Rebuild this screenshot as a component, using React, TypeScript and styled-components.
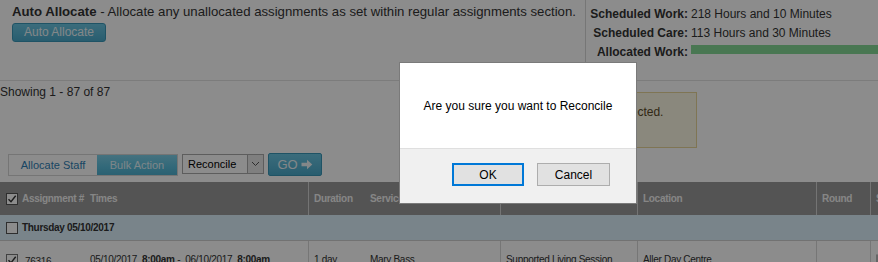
import React from 'react';
import styled, { createGlobalStyle } from 'styled-components';

const GlobalStyle = createGlobalStyle`
  html, body {
    margin: 0;
    padding: 0;
    background: #fff;
  }
  body {
    font-family: "Liberation Sans", Arial, sans-serif;
    color: #333;
    width: 878px;
    height: 262px;
    overflow: hidden;
  }
`;

const Page = styled.div`
  position: relative;
  width: 878px;
  height: 262px;
  overflow: hidden;
`;

const Top = styled.div`
  display: flex;
  height: 80px;
  border-bottom: 1px solid #e2e2e2;
`;

const AutoPanel = styled.div`
  width: 586px;
  padding: 3px 0 0 12px;
  box-sizing: border-box;
  border-right: 1px solid #d8d8d8;
`;

const Intro = styled.div`
  font-size: 13.2px;
  line-height: 18px;
  color: #333;
  white-space: nowrap;
  b {
    font-weight: bold;
  }
`;

const TealButton = styled.button`
  display: block;
  margin-top: 2px;
  width: 94px;
  height: 19px;
  padding: 0;
  border: 1px solid #3a98b8;
  border-radius: 3px;
  background: linear-gradient(#6cc6e2, #4aa9ca);
  color: #eef6f9;
  font-family: inherit;
  font-size: 12px;
  line-height: 17px;
`;

const Stats = styled.div`
  flex: 1;
  display: grid;
  grid-template-columns: 105px 1fr;
  grid-auto-rows: 19px;
  align-items: center;
  padding-top: 4px;
  font-size: 12px;
  color: #333;
`;

const StatLabel = styled.div`
  font-weight: bold;
  text-align: right;
  padding-right: 3px;
  white-space: nowrap;
`;

const StatValue = styled.div`
  white-space: nowrap;
`;

const Bar = styled.div`
  align-self: start;
  height: 9px;
  margin-top: 3px;
  background: #86d996;
`;

const Middle = styled.div`
  display: flex;
  align-items: flex-start;
  height: 72px;
`;

const Showing = styled.div`
  font-size: 12px;
  line-height: 14px;
  padding-top: 4px;
  width: 480px;
`;

const Alert = styled.div`
  margin-top: 11px;
  width: 217px;
  height: 56px;
  box-sizing: border-box;
  padding: 12px 0 0 45px;
  background: #fcf8e3;
  border: 1px solid #e8d59a;
  color: #5a4a2a;
  font-size: 12px;
  white-space: nowrap;
  overflow: hidden;
`;

const Toolbar = styled.div`
  display: flex;
  align-items: flex-start;
  padding-left: 8px;
  height: 29px;
`;

const Tabs = styled.div`
  display: flex;
  height: 22px;
  margin-top: 1px;
  border: 1px solid #d6d6d6;
  box-sizing: border-box;
`;

const Tab = styled.div<{ $active?: boolean }>`
  display: flex;
  align-items: center;
  justify-content: center;
  width: ${p => (p.$active ? 80 : 88)}px;
  font-size: 11px;
  color: ${p => (p.$active ? '#e4f4fa' : '#2f7fb5')};
  background: ${p =>
    p.$active ? 'linear-gradient(#7fd0e8, #5bbfdd 60%, #4fb0cf)' : '#fff'};
`;

const Select = styled.div`
  display: flex;
  margin: 1px 0 0 4px;
  width: 82px;
  height: 20px;
  box-sizing: border-box;
  border: 1px solid #a9a9a9;
  background: #fff;
`;

const SelectText = styled.div`
  flex: 1;
  font-size: 11px;
  line-height: 18px;
  padding-left: 5px;
  color: #000;
`;

const SelectArrow = styled.div`
  width: 15px;
  border-left: 1px solid #a9a9a9;
  background: #e8e8e8;
  display: flex;
  align-items: center;
  justify-content: center;
`;

const GoButton = styled.div`
  margin-left: 4px;
  width: 54px;
  height: 23px;
  box-sizing: border-box;
  border: 1px solid #3a98b8;
  border-radius: 2px;
  background: linear-gradient(#6cc6e2, #4aa9ca);
  color: #eef6f9;
  font-size: 13px;
  display: flex;
  align-items: center;
  justify-content: center;
  gap: 3px;
`;

const cols = '85px 223px 57px 135px 137px 179px 54px 1fr';

const HeadRow = styled.div`
  display: grid;
  grid-template-columns: ${cols};
  height: 33px;
  background: #999;
  color: #f4f4f4;
  font-size: 10px;
  letter-spacing: -0.3px;
  font-weight: bold;
`;

const HeadCell = styled.div<{ $line?: boolean }>`
  display: flex;
  align-items: center;
  gap: 4px;
  padding-left: 5px;
  white-space: nowrap;
  overflow: hidden;
  border-left: ${p => (p.$line ? '1px solid #d4d4d4' : 'none')};
`;

const FirstHeadCell = styled(HeadCell)`
  padding-left: 6px;
  overflow: visible;
`;

const GroupRow = styled.div`
  display: flex;
  align-items: center;
  gap: 4px;
  height: 25px;
  padding-left: 6px;
  background: #dcf0fc;
  border-bottom: 1px solid #d0d0d0;
  font-size: 10px;
  letter-spacing: -0.3px;
  font-weight: bold;
  color: #333;
`;

const DataRow = styled.div`
  display: grid;
  grid-template-columns: ${cols};
  height: 40px;
  font-size: 10px;
  letter-spacing: -0.3px;
  color: #333;
`;

const Cell = styled.div<{ $line?: boolean }>`
  display: flex;
  align-items: flex-start;
  gap: 7px;
  padding: 13px 0 0 5px;
  white-space: nowrap;
  overflow: hidden;
  border-left: ${p => (p.$line ? '1px solid #d8d8d8' : 'none')};
  b {
    font-weight: bold;
  }
`;

const FirstCell = styled(Cell)`
  padding-left: 6px;
`;

const Box = styled.span<{ $dark?: boolean }>`
  display: inline-flex;
  align-items: center;
  justify-content: center;
  width: 12px;
  height: 12px;
  flex: none;
  box-sizing: border-box;
  border: 1px solid ${p => (p.$dark ? '#555' : '#777')};
  background: #fff;
`;

const SmallButton = styled.span`
  width: 20px;
  height: 20px;
  border: 1px solid #bbb;
  border-radius: 3px;
`;

const Overlay = styled.div`
  position: absolute;
  inset: 0;
  background: rgba(0, 0, 0, 0.45);
`;

const Dialog = styled.div`
  position: absolute;
  left: 399px;
  top: 62px;
  width: 238px;
  height: 142px;
  box-sizing: border-box;
  border: 1px solid #7a7a7a;
  background: #fff;
  display: flex;
  flex-direction: column;
  font-family: "Liberation Sans", Arial, sans-serif;
`;

const DialogBody = styled.div`
  height: 85px;
  display: flex;
  align-items: center;
  justify-content: center;
  font-size: 12px;
  color: #000;
  box-sizing: border-box;
`;

const DialogFoot = styled.div`
  flex: 1;
  background: #f0f0f0;
  border-top: 1px solid #dfdfdf;
  display: flex;
  justify-content: flex-end;
  align-items: flex-start;
  gap: 13px;
  padding: 14px 26px 0 0;
`;

const DialogButton = styled.button<{ $primary?: boolean }>`
  width: ${p => (p.$primary ? 72 : 73)}px;
  height: 23px;
  box-sizing: border-box;
  padding: 0;
  background: #e1e1e1;
  border: ${p => (p.$primary ? '2px solid #0078d7' : '1px solid #adadad')};
  font-family: inherit;
  font-size: 12px;
  color: #000;
`;

const Check = () => (
  <svg width="10" height="10" viewBox="0 0 10 10">
    <path d="M1.5 5.2 L4 7.8 L8.7 1.8" fill="none" stroke="#333" strokeWidth="1.4" />
  </svg>
);

const App: React.FC = () => {
  return (
    <Page>
      <GlobalStyle />
      <Top>
        <AutoPanel>
          <Intro>
            <b>Auto Allocate</b> - Allocate any unallocated assignments as set within regular assignments section.
          </Intro>
          <TealButton>Auto Allocate</TealButton>
        </AutoPanel>
        <Stats>
          <StatLabel>Scheduled Work:</StatLabel>
          <StatValue>218 Hours and 10 Minutes</StatValue>
          <StatLabel>Scheduled Care:</StatLabel>
          <StatValue>113 Hours and 30 Minutes</StatValue>
          <StatLabel>Allocated Work:</StatLabel>
          <Bar />
        </Stats>
      </Top>

      <Middle>
        <Showing>Showing 1 - 87 of 87</Showing>
        <Alert>No assignments selected.</Alert>
      </Middle>

      <Toolbar>
        <Tabs>
          <Tab>Allocate Staff</Tab>
          <Tab $active>Bulk Action</Tab>
        </Tabs>
        <Select>
          <SelectText>Reconcile</SelectText>
          <SelectArrow>
            <svg width="9" height="6" viewBox="0 0 9 6">
              <path d="M1 1 L4.5 4.5 L8 1" fill="none" stroke="#555" strokeWidth="1" />
            </svg>
          </SelectArrow>
        </Select>
        <GoButton>
          GO
          <svg width="12" height="11" viewBox="0 0 12 11">
            <path d="M0.5 3.8 H6 V0.8 L11.3 5.5 L6 10.2 V7.2 H0.5 Z" fill="#eef6f9" />
          </svg>
        </GoButton>
      </Toolbar>

      <HeadRow>
        <FirstHeadCell>
          <Box $dark>
            <Check />
          </Box>
          Assignment #
        </FirstHeadCell>
        <HeadCell>Times</HeadCell>
        <HeadCell $line>Duration</HeadCell>
        <HeadCell>Service</HeadCell>
        <HeadCell $line>Service Type</HeadCell>
        <HeadCell $line>Location</HeadCell>
        <HeadCell $line>Round</HeadCell>
        <HeadCell $line>Status</HeadCell>
      </HeadRow>

      <GroupRow>
        <Box $dark />
        Thursday 05/10/2017
      </GroupRow>

      <DataRow>
        <FirstCell>
          <Box>
            <Check />
          </Box>
          <span style={{ paddingTop: 2 }}>76316</span>
        </FirstCell>
        <Cell>
          <span>
            05/10/2017&nbsp; <b>8:00am</b> -&nbsp; 06/10/2017&nbsp; <b>8:00am</b>
          </span>
        </Cell>
        <Cell $line>1 day</Cell>
        <Cell>Mary Bass</Cell>
        <Cell $line>Supported Living Session</Cell>
        <Cell $line>Aller Day Centre</Cell>
        <Cell $line />
        <Cell $line>
          <SmallButton />
        </Cell>
      </DataRow>

      <Overlay />
      <Dialog>
        <DialogBody>Are you sure you want to Reconcile</DialogBody>
        <DialogFoot>
          <DialogButton $primary>OK</DialogButton>
          <DialogButton>Cancel</DialogButton>
        </DialogFoot>
      </Dialog>
    </Page>
  );
};

export default App;
